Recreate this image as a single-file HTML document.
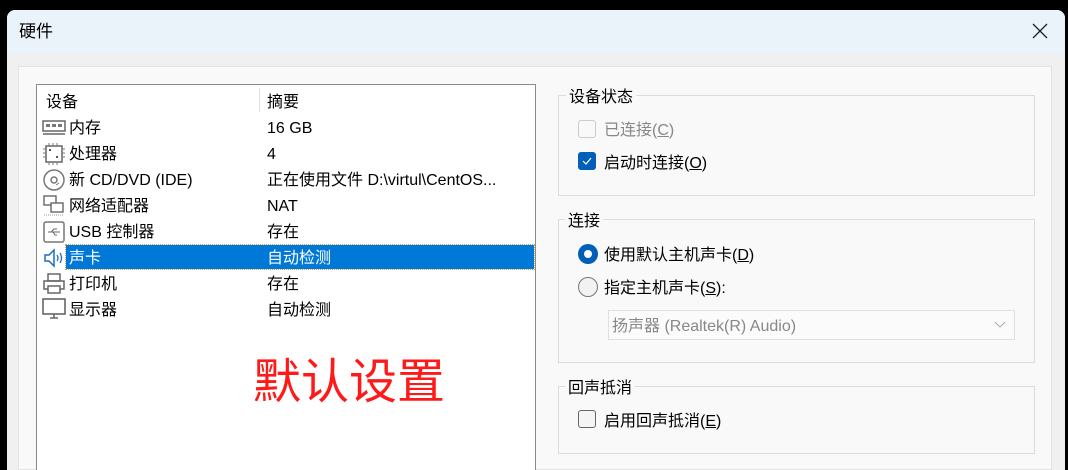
<!DOCTYPE html>
<html><head><meta charset="utf-8"><style>
*{margin:0;padding:0;box-sizing:border-box}
html,body{width:1068px;height:470px;overflow:hidden}
body{background:#000;position:relative;font-family:"Liberation Sans","Noto Sans CJK SC",sans-serif;font-size:16px;color:#000}
.win{position:absolute;left:7px;top:10px;width:1058px;height:460px;background:#f0f0f0;border-radius:8px 8px 0 0;overflow:hidden}
.title{position:absolute;left:0;top:0;width:100%;height:43px;background:#eaf2fa}
.title span{position:absolute;left:12px;top:11px;font-size:17px;line-height:22px}
.close{position:absolute;left:1024px;top:12px}
.panel{position:absolute;left:18px;top:66px;width:1034px;height:404px;background:#f9f9f9;border:1px solid #e3e3e3}
.list{position:absolute;left:36px;top:84px;width:500px;height:386px;background:#fff;border:1px solid #8a8a8a;border-bottom:none}
.a{position:absolute;white-space:nowrap;line-height:20px;margin-top:2px}
.ic{position:absolute;left:5px}
.sel{position:absolute;left:29px;top:160px;width:468px;height:24px;background:#0078d7;outline:1px dotted #c8a060}
fieldset{position:absolute;border:1px solid #dcdcdc}
.leg{position:absolute;background:#f9f9f9;padding:0 3px;font-size:16px;line-height:20px;margin-top:2px}
.cb{position:absolute;width:18px;height:18px;border:1px solid #888;border-radius:3px;background:#f4f4f4}
.rb{position:absolute;width:20px;height:20px;border-radius:50%}
u{text-decoration:underline}
</style></head><body>
<div class="win">
 <div class="title"><span>硬件</span>
 <svg class="close" width="18" height="18"><path d="M2 2L16 16M16 2L2 16" stroke="#222" stroke-width="1.3"/></svg></div>
</div>
<div class="panel"></div>
<div class="list">
 <div class="a" style="left:9px;top:6px">设备</div>
 <div style="position:absolute;left:222px;top:3px;width:1px;height:24px;background:#e0e0e0"></div>
 <div class="a" style="left:230px;top:6px">摘要</div>
 <div class="sel"></div>
 <svg class="ic" style="top:34px" width="24" height="18"><rect x="1" y="2" width="22" height="10" fill="none" stroke="#666" stroke-width="1.5"/><rect x="4" y="5" width="4" height="3" fill="#777"/><rect x="10" y="5" width="4" height="3" fill="#777"/><rect x="16" y="5" width="4" height="3" fill="#777"/><path d="M1 15H23" stroke="#666" stroke-width="1.5"/></svg>
 <svg class="ic" style="top:57px" width="24" height="24"><rect x="4" y="4" width="16" height="16" fill="none" stroke="#666" stroke-width="1.5"/><path d="M1 7H4M1 11H4M1 15H4M20 7H23M20 11H23M20 15H23M7 1V4M11 1V4M15 1V4M7 20V23M11 20V23M15 20V23" stroke="#777"/><rect x="7" y="7" width="2" height="2" fill="#555"/><rect x="14" y="14" width="2" height="2" fill="#555"/></svg>
 <svg class="ic" style="top:83px" width="24" height="24"><circle cx="12" cy="12" r="10" fill="none" stroke="#777" stroke-width="1.5"/><circle cx="12" cy="12" r="3" fill="none" stroke="#777" stroke-width="1.5"/><path d="M14 17L17 15" stroke="#777"/></svg>
 <svg class="ic" style="top:109px" width="24" height="24"><rect x="2" y="2" width="12" height="9" fill="none" stroke="#666" stroke-width="1.4"/><rect x="9" y="9" width="12" height="9" fill="#fff" stroke="#666" stroke-width="1.4"/><path d="M2 21H22" stroke="#999" stroke-dasharray="1 1"/></svg>
 <svg class="ic" style="top:135px" width="24" height="24"><rect x="2" y="2" width="20" height="20" rx="2" fill="none" stroke="#777" stroke-width="1.5"/><path d="M6 12H18M9 12L12 9H15M11 12L13 15H15" stroke="#666" fill="none"/></svg>
 <svg class="ic" style="top:161px" width="24" height="24"><path d="M3 9H7L12 4V20L7 15H3Z" fill="none" stroke="#1a6fc4" stroke-width="1.5"/><path d="M15 9Q17 12 15 15M18 7Q21 12 18 17" fill="none" stroke="#1a6fc4" stroke-width="1.3"/></svg>
 <svg class="ic" style="top:187px" width="24" height="24"><rect x="6" y="2" width="12" height="7" fill="none" stroke="#666" stroke-width="1.5"/><rect x="2" y="9" width="20" height="8" fill="none" stroke="#666" stroke-width="1.5"/><rect x="6" y="14" width="12" height="7" fill="#fff" stroke="#666" stroke-width="1.5"/></svg>
 <svg class="ic" style="top:212px" width="26" height="24"><rect x="1" y="2" width="22" height="15" fill="none" stroke="#666" stroke-width="1.6"/><path d="M8 21H16M12 17V21" stroke="#666" stroke-width="1.6"/></svg>
 <div class="a" style="left:32px;top:32px">内存</div><div class="a" style="left:230px;top:32px">16 GB</div>
 <div class="a" style="left:32px;top:58px">处理器</div><div class="a" style="left:230px;top:58px">4</div>
 <div class="a" style="left:32px;top:84px">新 CD/DVD (IDE)</div><div class="a" style="left:230px;top:84px">正在使用文件 D:\virtul\CentOS...</div>
 <div class="a" style="left:32px;top:110px">网络适配器</div><div class="a" style="left:230px;top:110px">NAT</div>
 <div class="a" style="left:32px;top:136px">USB 控制器</div><div class="a" style="left:230px;top:136px">存在</div>
 <div class="a" style="left:32px;top:162px;color:#fff">声卡</div><div class="a" style="left:230px;top:162px;color:#fff">自动检测</div>
 <div class="a" style="left:32px;top:188px">打印机</div><div class="a" style="left:230px;top:188px">存在</div>
 <div class="a" style="left:32px;top:214px">显示器</div><div class="a" style="left:230px;top:214px">自动检测</div>
 <div class="a" style="left:216px;top:268px;color:#ff1a1a;font-size:48px;line-height:56px">默认设置</div>
</div>

<fieldset style="left:558px;top:95px;width:477px;height:101px"></fieldset>
<div class="leg" style="left:566px;top:86px">设备状态</div>
<div class="cb" style="left:578px;top:120px;border-color:#ccc;background:#f9f9f9"></div>
<div class="a" style="left:604px;top:119px;color:#888">已连接(<u>C</u>)</div>
<div class="cb" style="left:578px;top:152px;background:#005fb8;border-color:#005fb8"><svg width="16" height="16"><path d="M4 8L7 11L12 5" stroke="#fff" fill="none" stroke-width="1.2"/></svg></div>
<div class="a" style="left:604px;top:152px">启动时连接(<u>O</u>)</div>

<fieldset style="left:558px;top:219px;width:477px;height:144px"></fieldset>
<div class="leg" style="left:565px;top:210px">连接</div>
<div class="rb" style="left:578px;top:244px;background:#005fb8"><div style="position:absolute;left:6px;top:6px;width:8px;height:8px;border-radius:50%;background:#fff"></div></div>
<div class="a" style="left:604px;top:244px">使用默认主机声卡(<u>D</u>)</div>
<div class="rb" style="left:578px;top:277px;border:1px solid #777;background:#f2f2f2"></div>
<div class="a" style="left:604px;top:277px">指定主机声卡(<u>S</u>):</div>
<div style="position:absolute;left:608px;top:310px;width:407px;height:30px;border:1px solid #e0e0e0;background:#fbfbfb"></div>
<div class="a" style="left:612px;top:315px;color:#888">扬声器 (Realtek(R) Audio)</div>
<svg style="position:absolute;left:993px;top:320px" width="14" height="10"><path d="M2 2L7 7L12 2" stroke="#aaa" fill="none"/></svg>

<fieldset style="left:558px;top:386px;width:477px;height:68px"></fieldset>
<div class="leg" style="left:565px;top:377px">回声抵消</div>
<div class="cb" style="left:578px;top:410px;border-color:#666"></div>
<div class="a" style="left:604px;top:410px">启用回声抵消(<u>E</u>)</div>
</body></html>
